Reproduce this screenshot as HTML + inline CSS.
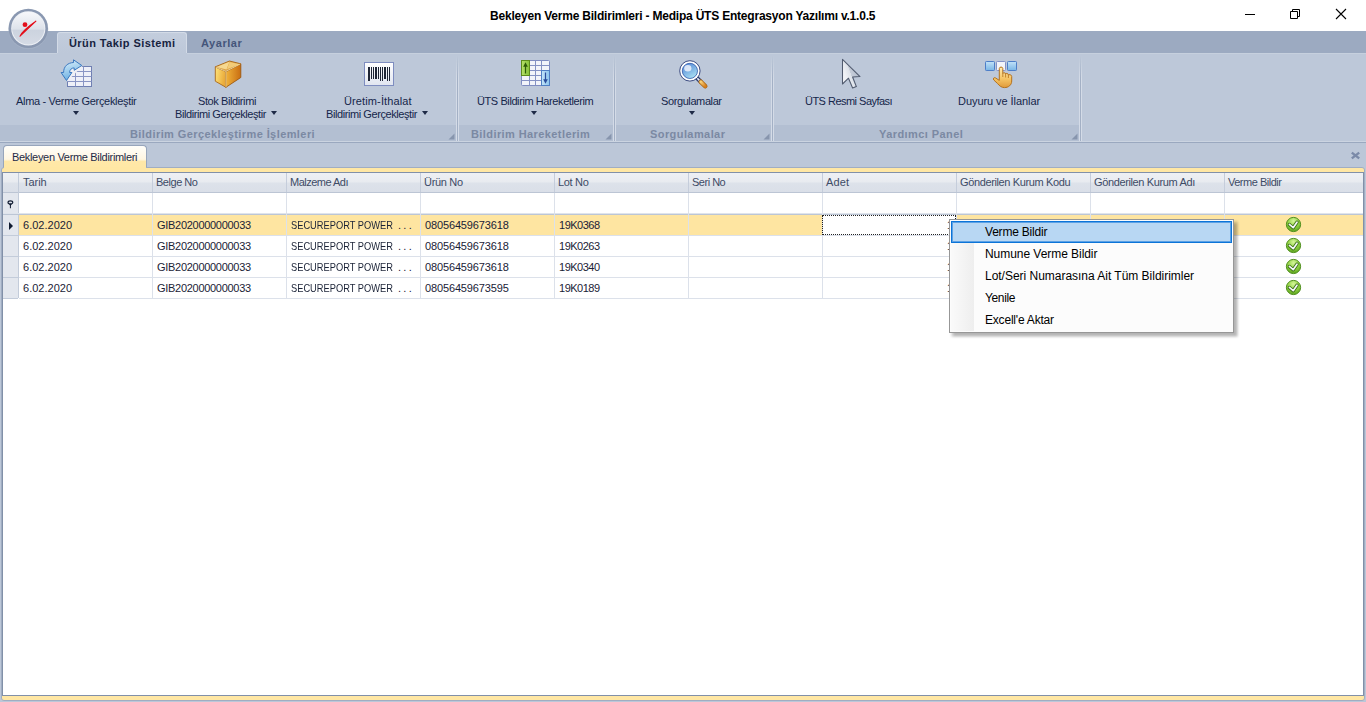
<!DOCTYPE html>
<html><head><meta charset="utf-8">
<style>
*{margin:0;padding:0;box-sizing:border-box}
html,body{width:1366px;height:702px;overflow:hidden;background:#bcc7d8;font-family:"Liberation Sans",sans-serif;font-size:11px}
.a{position:absolute}
.t{position:absolute;white-space:nowrap;line-height:11px}
#title{left:0;top:0;width:1366px;height:31px;background:#fff}
#tabrow{left:0;top:31px;width:1366px;height:22px;background:#9caac1}
#ribbon{left:0;top:53px;width:1366px;height:88px;background:#bdc8d9}
.cap{top:125px;height:16px;background:#b3bfd2}
.sep{top:53px;width:3px;height:88px;background:linear-gradient(90deg,rgba(214,221,232,.9) 0,rgba(214,221,232,.9) 1px,#a3b0c5 1px,#a3b0c5 2px,rgba(214,221,232,.9) 2px);-webkit-mask-image:linear-gradient(180deg,transparent 0,transparent 3px,#000 25px)}
.rt{color:#15264a;letter-spacing:-0.4px}
.ct{color:#7b89a3;font-weight:bold;letter-spacing:0.42px}
.arr{position:absolute;width:0;height:0;border-left:3.5px solid transparent;border-right:3.5px solid transparent;border-top:4px solid #1e2a46}
.hd{color:#3d4b66;letter-spacing:-0.4px}
.cell{color:#1a2236}
.vl{position:absolute;width:1px;background:#d7dde7}
.hl{position:absolute;height:1px;background:#d7dde7}
.mi{position:absolute;left:985px;font-size:12px;line-height:12px;color:#000;white-space:nowrap}
</style></head><body>
<!-- title bar -->
<div id="title" class="a"></div>
<div class="t" style="left:490px;top:10px;font-size:12px;line-height:12px;font-weight:bold;color:#000;letter-spacing:-0.21px">Bekleyen Verme Bildirimleri - Medipa ÜTS Entegrasyon Yazılımı v.1.0.5</div>
<div class="a" style="left:1245px;top:14px;width:10px;height:1px;background:#000"></div>
<svg class="a" style="left:1289px;top:8px" width="12" height="12" viewBox="0 0 12 12"><path d="M1.5 3.5h7v7h-7z M3.5 3.5v-2h7v7h-2" fill="none" stroke="#000" stroke-width="1"/></svg>
<svg class="a" style="left:1335px;top:8px" width="12" height="12" viewBox="0 0 12 12"><path d="M1 1L11 11M11 1L1 11" stroke="#000" stroke-width="1.1"/></svg>

<!-- tab row -->
<div id="tabrow" class="a"></div>
<div class="a" style="left:57px;top:32px;width:130px;height:21px;background:linear-gradient(#c3cddd,#bdc8d9);border:1px solid #d3dbe7;border-bottom:none;border-radius:3px 3px 0 0"></div>
<div class="t" style="left:69px;top:38px;font-weight:bold;color:#17233f;letter-spacing:0.43px">Ürün Takip Sistemi</div>
<div class="t" style="left:201px;top:38px;font-weight:bold;color:#44557a;letter-spacing:0.55px">Ayarlar</div>

<!-- ribbon -->
<div id="ribbon" class="a"></div>
<div class="a" style="left:0;top:53px;width:57px;height:1px;background:#c6d0de"></div><div class="a" style="left:187px;top:53px;width:1179px;height:1px;background:#c6d0de"></div>
<div class="a cap" style="left:0;width:456px"></div>
<div class="a cap" style="left:459px;width:154px"></div>
<div class="a cap" style="left:616px;width:155px"></div>
<div class="a cap" style="left:774px;width:305px"></div>
<div class="a sep" style="left:456px"></div>
<div class="a sep" style="left:613px"></div>
<div class="a sep" style="left:771px"></div>
<div class="a sep" style="left:1079px"></div>
<svg class="a" style="left:448px;top:133px" width="7" height="7" viewBox="0 0 7 7"><path d="M6.5 0.5V6.5H0.5Z" fill="#8795ad"/></svg>
<svg class="a" style="left:605px;top:133px" width="7" height="7" viewBox="0 0 7 7"><path d="M6.5 0.5V6.5H0.5Z" fill="#8795ad"/></svg>
<svg class="a" style="left:763px;top:133px" width="7" height="7" viewBox="0 0 7 7"><path d="M6.5 0.5V6.5H0.5Z" fill="#8795ad"/></svg>
<svg class="a" style="left:1071px;top:133px" width="7" height="7" viewBox="0 0 7 7"><path d="M6.5 0.5V6.5H0.5Z" fill="#8795ad"/></svg>
<div class="a" style="left:0;top:141px;width:1366px;height:1px;background:#cbd4e1"></div>
<div class="a" style="left:0;top:142px;width:1366px;height:1px;background:#9aa8bf"></div>

<!-- app button -->
<svg class="a" style="left:6px;top:6px" width="46" height="46" viewBox="0 0 46 46">
<defs>
<linearGradient id="apg" x1="0" y1="0" x2="0" y2="1"><stop offset="0" stop-color="#f7f8fb"/><stop offset="0.53" stop-color="#dde2ea"/><stop offset="0.56" stop-color="#ccd3df"/><stop offset="1" stop-color="#d5dbe5"/></linearGradient>
</defs>
<circle cx="22.3" cy="23.2" r="20" fill="#a9b5c9" opacity="0.5"/>
<circle cx="22.3" cy="22.4" r="19.7" fill="#8a98b1"/>
<circle cx="22.3" cy="22.4" r="17.1" fill="#eef1f6"/>
<circle cx="22.3" cy="22.2" r="16.2" fill="url(#apg)"/>
<circle cx="19" cy="18.7" r="2.4" fill="#e3101c"/>
<path d="M14 30.2 C 15.8 26.2, 22 20.6, 29.9 15.2 C 23.5 21.2, 18 26.4, 14 30.2 Z" fill="#e3101c" stroke="#e3101c" stroke-width="1.1" stroke-linejoin="round"/>
</svg>
<!-- Alma-Verme icon -->
<svg class="a" style="left:58px;top:56px" width="38" height="36" viewBox="0 0 38 36">
<defs><linearGradient id="arg" x1="0" y1="0" x2="0.3" y2="1"><stop offset="0" stop-color="#e2f4fd"/><stop offset="1" stop-color="#6cb0e2"/></linearGradient></defs>
<rect x="9.5" y="10.5" width="24" height="20" fill="#eef0f8" stroke="#6f7fb2" stroke-width="1"/>
<path d="M17.5 10.5V30.5M25.5 10.5V30.5M9.5 15.5H33.5M9.5 20.5H33.5M9.5 25.5H33.5" stroke="#8995c4" stroke-width="1"/>
<path d="M9 10 L24.5 10 L9 25.5 Z" fill="#eff0f4"/>
<path d="M15.5 3.8 L23.8 9.5 L16.2 14.3 L16.2 11.9 C13.4 11.9 11.6 13.8 11.6 16.5 L13.9 16.5 L8.5 24.5 L3.1 16.5 L5.6 16.5 C5.6 10.2 9.8 6.8 15.6 6.5 Z" fill="url(#arg)" stroke="#3a78c0" stroke-width="1" stroke-linejoin="round"/>
</svg>

<!-- Box icon -->
<svg class="a" style="left:210px;top:56px" width="38" height="36" viewBox="0 0 38 36">
<defs>
<linearGradient id="bxl" x1="0" y1="0" x2="1" y2="0.3"><stop offset="0" stop-color="#ffe47a"/><stop offset="1" stop-color="#e9a938"/></linearGradient>
<linearGradient id="bxr" x1="0" y1="0" x2="1" y2="0"><stop offset="0" stop-color="#f0b23a"/><stop offset="1" stop-color="#c96e12"/></linearGradient>
</defs>
<path d="M5.3 10.8 L15.9 15.6 L15.9 31.3 L5.3 25.2 Z" fill="url(#bxl)" stroke="#a8661a" stroke-width="0.9" stroke-linejoin="round"/>
<path d="M15.9 15.6 L30.8 7.8 L30.8 21.5 L15.9 31.3 Z" fill="url(#bxr)" stroke="#9c5810" stroke-width="0.9" stroke-linejoin="round"/>
<path d="M5.3 10.8 L19.5 5 L30.8 7.8 L15.9 15.6 Z" fill="#dca245" stroke="#a8661a" stroke-width="0.9" stroke-linejoin="round"/>
<path d="M6.5 11 L19.5 5.8 L16.5 13.5 Z" fill="#f6d890"/>
<path d="M17 13.2 L19.6 6 L29.8 8.2 Z" fill="#f3cc78"/>
<path d="M16 15.8 L16 31" stroke="#ffe9a8" stroke-width="0.8"/>
<path d="M5.8 11 L15.9 15.4 L30.2 8" fill="none" stroke="#fff0c0" stroke-width="0.7"/>
</svg>

<!-- Barcode icon -->
<svg class="a" style="left:360px;top:58px" width="38" height="32" viewBox="0 0 38 32">
<defs><linearGradient id="bcg" x1="0" y1="0" x2="0" y2="1"><stop offset="0" stop-color="#ffffff"/><stop offset="1" stop-color="#e0e5f0"/></linearGradient></defs>
<rect x="4.5" y="4.5" width="29" height="23" fill="url(#bcg)" stroke="#7e8dc0" stroke-width="1"/>
<g fill="#1e2535">
<rect x="8" y="9" width="2" height="14"/><rect x="11" y="9" width="1" height="12"/><rect x="13" y="9" width="1" height="12"/>
<rect x="15" y="9" width="2" height="12"/><rect x="18" y="9" width="1" height="12"/><rect x="20" y="9" width="1" height="14"/>
<rect x="22" y="9" width="1" height="14"/><rect x="24" y="9" width="2" height="12"/><rect x="27" y="9" width="1" height="14"/>
<rect x="29" y="9" width="1" height="14"/>
</g>
</svg>

<!-- ÜTS Bildirim Hareketlerim icon -->
<svg class="a" style="left:516px;top:56px" width="38" height="34" viewBox="0 0 38 34">
<defs>
<linearGradient id="hgg" x1="0" y1="0" x2="1" y2="0"><stop offset="0" stop-color="#b6e06a"/><stop offset="1" stop-color="#86c23a"/></linearGradient>
<linearGradient id="hbg" x1="0" y1="0" x2="1" y2="0"><stop offset="0" stop-color="#c4e4f8"/><stop offset="1" stop-color="#8cc4ec"/></linearGradient>
</defs>
<rect x="5.5" y="4.5" width="28" height="25" rx="1" fill="#f2f4fa" stroke="#7f8cc0" stroke-width="1"/>
<path d="M13.5 4.5V29.5M19.5 4.5V29.5M25.5 4.5V29.5M5.5 9.5H33.5M5.5 14.5H33.5M5.5 19.5H33.5M5.5 24.5H33.5" stroke="#8592c4" stroke-width="1"/>
<rect x="5.5" y="4.5" width="8" height="15" fill="url(#hgg)" stroke="#5d8c1c" stroke-width="1"/>
<path d="M9.5 17.5V9" stroke="#2c5a08" stroke-width="1.2"/><path d="M7.2 10.8L9.5 6.2L11.8 10.8Z" fill="#2c5a08"/>
<rect x="25.5" y="14.5" width="8" height="15" fill="url(#hbg)" stroke="#4f7fc4" stroke-width="1"/>
<path d="M29.5 16.5V25" stroke="#2a4d9c" stroke-width="1.2"/><path d="M27.2 23.2L29.5 27.8L31.8 23.2Z" fill="#2a4d9c"/>
</svg>

<!-- Magnifier -->
<svg class="a" style="left:674px;top:56px" width="38" height="36" viewBox="0 0 38 36">
<defs>
<linearGradient id="mgl" x1="0" y1="0" x2="0.6" y2="1"><stop offset="0" stop-color="#4c7fd2"/><stop offset="1" stop-color="#a6dcf2"/></linearGradient>
<linearGradient id="mgh" x1="0" y1="0" x2="1" y2="1"><stop offset="0" stop-color="#f8d27a"/><stop offset="1" stop-color="#d8801e"/></linearGradient>
</defs>
<path d="M23 22 L26.5 25.5" stroke="#2f3f70" stroke-width="4.2" stroke-linecap="round"/>
<path d="M23.3 22.3 L25.6 24.6" stroke="#e8eef8" stroke-width="1.6"/>
<path d="M26.8 25.8 L31.2 30.2" stroke="#b06a18" stroke-width="4.6" stroke-linecap="round"/>
<path d="M26.8 25.8 L31.2 30.2" stroke="url(#mgh)" stroke-width="3" stroke-linecap="round"/>
<circle cx="15.9" cy="14.9" r="10.2" fill="#fff" stroke="#3d4d82" stroke-width="1"/>
<circle cx="15.9" cy="14.9" r="7.6" fill="url(#mgl)" stroke="#2d55a8" stroke-width="0.8"/>
<ellipse cx="13.8" cy="12.2" rx="3.6" ry="3.2" fill="#eef2fb" opacity="0.85"/>
</svg>

<!-- Pointer -->
<svg class="a" style="left:834px;top:56px" width="38" height="36" viewBox="0 0 38 36">
<defs><linearGradient id="ptg" gradientUnits="userSpaceOnUse" x1="9" y1="14" x2="20" y2="10"><stop offset="0" stop-color="#f0f2f6"/><stop offset="0.5" stop-color="#dce1e9"/><stop offset="0.52" stop-color="#c6cdd9"/><stop offset="1" stop-color="#b9c2d0"/></linearGradient></defs>
<path d="M8.5 3.3 L8.5 28 L14.5 22.2 L18.6 32 L22.4 30.6 L18.6 21 L26 20.6 Z" fill="url(#ptg)" stroke="#515b6f" stroke-width="1.05" stroke-linejoin="round"/>
</svg>

<!-- Squares + hand -->
<svg class="a" style="left:982px;top:56px" width="38" height="36" viewBox="0 0 38 36">
<defs>
<linearGradient id="sqb" x1="0" y1="0" x2="0" y2="1"><stop offset="0" stop-color="#c2e2f8"/><stop offset="1" stop-color="#7ab6e6"/></linearGradient>
<linearGradient id="hnd" x1="0" y1="0" x2="0" y2="1"><stop offset="0" stop-color="#ffefb8"/><stop offset="0.6" stop-color="#f4c262"/><stop offset="1" stop-color="#e09a3a"/></linearGradient>
</defs>
<rect x="3.5" y="5.5" width="9" height="9" rx="0.8" fill="url(#sqb)" stroke="#4d7ec8" stroke-width="1"/>
<rect x="14.5" y="5.5" width="9" height="9" rx="0.8" fill="#f2f4fa" stroke="#8392c8" stroke-width="1"/>
<rect x="25.5" y="5.5" width="9" height="9" rx="0.8" fill="url(#sqb)" stroke="#4d7ec8" stroke-width="1"/>
<path d="M17.3 12.5 C17.3 10.6 20.8 10.6 20.8 12.5 L20.8 17.6 C21 16.4 23.6 16.4 23.6 18 C23.8 17.1 26.4 17.1 26.4 19 C26.7 18.4 29.7 18.4 29.7 20.5 L29.7 25 C29.7 29 26.5 31.6 22.5 31.6 C19.5 31.6 17.6 30 15.6 27.6 L11.8 24 C10.6 22.8 12 20.8 13.7 22 L17.3 24.4 Z" fill="url(#hnd)" stroke="#b4711c" stroke-width="1" stroke-linejoin="round"/>
<path d="M20.8 17.6 L20.8 21 M23.6 18 L23.6 21.5 M26.4 19 L26.4 22" stroke="#b4711c" stroke-width="0.8"/>
</svg>

<!-- ribbon texts -->
<div class="t rt" style="left:16px;top:96px;letter-spacing:-0.32px">Alma - Verme Gerçekleştir</div>
<div class="arr" style="left:73px;top:111px"></div>
<div class="t rt" style="left:198px;top:96px">Stok Bildirimi</div>
<div class="t rt" style="left:175px;top:109px;letter-spacing:-0.42px">Bildirimi Gerçekleştir</div>
<div class="arr" style="left:271px;top:111px"></div>
<div class="t rt" style="left:344px;top:96px;letter-spacing:0.12px">Üretim-İthalat</div>
<div class="t rt" style="left:326px;top:109px;letter-spacing:-0.42px">Bildirimi Gerçekleştir</div>
<div class="arr" style="left:422px;top:111px"></div>
<div class="t rt" style="left:477px;top:96px;letter-spacing:-0.41px">ÜTS Bildirim Hareketlerim</div>
<div class="arr" style="left:531px;top:111px"></div>
<div class="t rt" style="left:661px;top:96px">Sorgulamalar</div>
<div class="arr" style="left:689px;top:111px"></div>
<div class="t rt" style="left:805px;top:96px;letter-spacing:-0.52px">ÜTS Resmi Sayfası</div>
<div class="t rt" style="left:958px;top:96px;letter-spacing:-0.06px">Duyuru ve İlanlar</div>

<div class="t ct" style="left:130px;top:129px">Bildirim Gerçekleştirme İşlemleri</div>
<div class="t ct" style="left:471px;top:129px;letter-spacing:0.41px">Bildirim Hareketlerim</div>
<div class="t ct" style="left:650px;top:129px">Sorgulamalar</div>
<div class="t ct" style="left:879px;top:129px">Yardımcı Panel</div>

<!-- MDI -->
<div class="a" style="left:3px;top:145px;width:144px;height:27px;border:1px solid #97a5bb;border-bottom:none;border-radius:4px 4px 0 0;background:linear-gradient(#fffefa 0%,#fff6e2 50%,#fff2d2 55%,#ffe8a8 57%,#ffe7a4 100%)"></div>
<div class="t" style="left:12px;top:152px;color:#1e2a46;letter-spacing:-0.32px">Bekleyen Verme Bildirimleri</div>
<div class="a" style="left:1px;top:167px;width:1364px;height:534px;background:#ffe7a4;border:1px solid #a0adc2;border-radius:3px"></div>
<div class="a" style="left:4px;top:167px;width:142px;height:2px;background:#ffe7a4"></div>
<svg class="a" style="left:1350px;top:151px" width="11" height="9" viewBox="0 0 11 9"><path d="M1.8 1.6L9.2 7.4M9.2 1.6L1.8 7.4" stroke="#7b8aa8" stroke-width="2.4"/></svg>

<!-- grid -->
<div class="a" style="left:2px;top:172px;width:1362px;height:524px;background:#fff;border:1px solid #8190a8"></div>
<!-- header -->
<div class="a" style="left:3px;top:173px;width:1360px;height:19px;background:linear-gradient(#eef0f4 0%,#e8ebf0 48%,#dde2ea 52%,#dadfe8 100%)"></div>
<div class="a" style="left:3px;top:192px;width:1360px;height:1px;background:#bcc5d4"></div>
<!-- indicator col -->
<div class="a" style="left:3px;top:193px;width:15px;height:105px;background:#e3e7ee"></div>
<div class="a" style="left:18px;top:173px;width:1px;height:125px;background:#c3ccda"></div>
<!-- filter row bottom -->
<div class="a" style="left:3px;top:213px;width:1360px;height:1px;background:#dfe4ec"></div>
<div class="a" style="left:3px;top:214px;width:1360px;height:1px;background:#bcc6d5"></div>
<!-- selected row -->
<div class="a" style="left:19px;top:215px;width:1344px;height:20px;background:#fee5a1"></div>
<div class="a" style="left:823px;top:215px;width:133px;height:20px;background:#fff"></div>


<div class="a" style="left:152px;top:173px;width:1px;height:19px;background:#c5cddb"></div>
<div class="a" style="left:152px;top:193px;width:1px;height:105px;background:#dce1ea"></div>
<div class="a" style="left:286px;top:173px;width:1px;height:19px;background:#c5cddb"></div>
<div class="a" style="left:286px;top:193px;width:1px;height:105px;background:#dce1ea"></div>
<div class="a" style="left:420px;top:173px;width:1px;height:19px;background:#c5cddb"></div>
<div class="a" style="left:420px;top:193px;width:1px;height:105px;background:#dce1ea"></div>
<div class="a" style="left:554px;top:173px;width:1px;height:19px;background:#c5cddb"></div>
<div class="a" style="left:554px;top:193px;width:1px;height:105px;background:#dce1ea"></div>
<div class="a" style="left:688px;top:173px;width:1px;height:19px;background:#c5cddb"></div>
<div class="a" style="left:688px;top:193px;width:1px;height:105px;background:#dce1ea"></div>
<div class="a" style="left:822px;top:173px;width:1px;height:19px;background:#c5cddb"></div>
<div class="a" style="left:822px;top:193px;width:1px;height:105px;background:#dce1ea"></div>
<div class="a" style="left:956px;top:173px;width:1px;height:19px;background:#c5cddb"></div>
<div class="a" style="left:956px;top:193px;width:1px;height:105px;background:#dce1ea"></div>
<div class="a" style="left:1090px;top:173px;width:1px;height:19px;background:#c5cddb"></div>
<div class="a" style="left:1090px;top:193px;width:1px;height:105px;background:#dce1ea"></div>
<div class="a" style="left:1224px;top:173px;width:1px;height:19px;background:#c5cddb"></div>
<div class="a" style="left:1224px;top:193px;width:1px;height:105px;background:#dce1ea"></div>
<div class="t hd" style="left:23px;top:177px;letter-spacing:-0.05px">Tarih</div>
<div class="t hd" style="left:156px;top:177px;letter-spacing:-0.47px">Belge No</div>
<div class="t hd" style="left:290px;top:177px;letter-spacing:-0.51px">Malzeme Adı</div>
<div class="t hd" style="left:424px;top:177px;letter-spacing:-0.31px">Ürün No</div>
<div class="t hd" style="left:558px;top:177px;letter-spacing:-0.32px">Lot No</div>
<div class="t hd" style="left:692px;top:177px;letter-spacing:-0.49px">Seri No</div>
<div class="t hd" style="left:826px;top:177px;letter-spacing:0.14px">Adet</div>
<div class="t hd" style="left:960px;top:177px;letter-spacing:-0.37px">Gönderilen Kurum Kodu</div>
<div class="t hd" style="left:1094px;top:177px;letter-spacing:-0.37px">Gönderilen Kurum Adı</div>
<div class="t hd" style="left:1228px;top:177px;letter-spacing:-0.49px">Verme Bildir</div>
<div class="a" style="left:19px;top:235px;width:1344px;height:1px;background:#dce1ea"></div>
<div class="a" style="left:3px;top:235px;width:15px;height:1px;background:#c3ccda"></div>
<div class="a" style="left:19px;top:256px;width:1344px;height:1px;background:#dce1ea"></div>
<div class="a" style="left:3px;top:256px;width:15px;height:1px;background:#c3ccda"></div>
<div class="a" style="left:19px;top:277px;width:1344px;height:1px;background:#dce1ea"></div>
<div class="a" style="left:3px;top:277px;width:15px;height:1px;background:#c3ccda"></div>
<div class="a" style="left:19px;top:298px;width:1344px;height:1px;background:#dce1ea"></div>
<div class="a" style="left:3px;top:298px;width:15px;height:1px;background:#c3ccda"></div>
<div class="t cell" style="left:23px;top:220px;letter-spacing:0.02px">6.02.2020</div>
<div class="t cell" style="left:157px;top:220px;letter-spacing:-0.29px">GIB2020000000033</div>
<div class="t cell" style="left:291px;top:220px;transform:scaleX(0.845);transform-origin:0 0">SECUREPORT POWER</div><div class="t cell" style="left:398px;top:220px;letter-spacing:2.3px">...</div>
<div class="t cell" style="left:425px;top:220px;letter-spacing:-0.14px">08056459673618</div>
<div class="t cell" style="left:559px;top:220px;letter-spacing:-0.49px">19K0368</div>
<div class="t cell" style="left:947px;top:220px">1</div>
<svg class="a" style="left:1285px;top:216px" width="17" height="17" viewBox="0 0 17 17"><defs><radialGradient id="g0" cx="50%" cy="25%" r="75%"><stop offset="0" stop-color="#d4f59a"/><stop offset="0.55" stop-color="#92d243"/><stop offset="1" stop-color="#5ca520"/></radialGradient></defs><circle cx="8.5" cy="8.5" r="7.1" fill="url(#g0)" stroke="#4c8c1a" stroke-width="1"/><path d="M4.4 8.4L8.2 11.7L12 6.2" fill="none" stroke="#356b10" stroke-width="3.3" stroke-linejoin="round" stroke-linecap="round"/><path d="M4.4 8.4L8.2 11.7L12 6.2" fill="none" stroke="#f4f6f8" stroke-width="1.7" stroke-linejoin="round" stroke-linecap="round"/></svg>
<div class="t cell" style="left:23px;top:241px;letter-spacing:0.02px">6.02.2020</div>
<div class="t cell" style="left:157px;top:241px;letter-spacing:-0.29px">GIB2020000000033</div>
<div class="t cell" style="left:291px;top:241px;transform:scaleX(0.845);transform-origin:0 0">SECUREPORT POWER</div><div class="t cell" style="left:398px;top:241px;letter-spacing:2.3px">...</div>
<div class="t cell" style="left:425px;top:241px;letter-spacing:-0.14px">08056459673618</div>
<div class="t cell" style="left:559px;top:241px;letter-spacing:-0.49px">19K0263</div>
<div class="t cell" style="left:947px;top:241px">1</div>
<svg class="a" style="left:1285px;top:237px" width="17" height="17" viewBox="0 0 17 17"><defs><radialGradient id="g1" cx="50%" cy="25%" r="75%"><stop offset="0" stop-color="#d4f59a"/><stop offset="0.55" stop-color="#92d243"/><stop offset="1" stop-color="#5ca520"/></radialGradient></defs><circle cx="8.5" cy="8.5" r="7.1" fill="url(#g1)" stroke="#4c8c1a" stroke-width="1"/><path d="M4.4 8.4L8.2 11.7L12 6.2" fill="none" stroke="#356b10" stroke-width="3.3" stroke-linejoin="round" stroke-linecap="round"/><path d="M4.4 8.4L8.2 11.7L12 6.2" fill="none" stroke="#f4f6f8" stroke-width="1.7" stroke-linejoin="round" stroke-linecap="round"/></svg>
<div class="t cell" style="left:23px;top:262px;letter-spacing:0.02px">6.02.2020</div>
<div class="t cell" style="left:157px;top:262px;letter-spacing:-0.29px">GIB2020000000033</div>
<div class="t cell" style="left:291px;top:262px;transform:scaleX(0.845);transform-origin:0 0">SECUREPORT POWER</div><div class="t cell" style="left:398px;top:262px;letter-spacing:2.3px">...</div>
<div class="t cell" style="left:425px;top:262px;letter-spacing:-0.14px">08056459673618</div>
<div class="t cell" style="left:559px;top:262px;letter-spacing:-0.49px">19K0340</div>
<div class="t cell" style="left:947px;top:262px">1</div>
<svg class="a" style="left:1285px;top:258px" width="17" height="17" viewBox="0 0 17 17"><defs><radialGradient id="g2" cx="50%" cy="25%" r="75%"><stop offset="0" stop-color="#d4f59a"/><stop offset="0.55" stop-color="#92d243"/><stop offset="1" stop-color="#5ca520"/></radialGradient></defs><circle cx="8.5" cy="8.5" r="7.1" fill="url(#g2)" stroke="#4c8c1a" stroke-width="1"/><path d="M4.4 8.4L8.2 11.7L12 6.2" fill="none" stroke="#356b10" stroke-width="3.3" stroke-linejoin="round" stroke-linecap="round"/><path d="M4.4 8.4L8.2 11.7L12 6.2" fill="none" stroke="#f4f6f8" stroke-width="1.7" stroke-linejoin="round" stroke-linecap="round"/></svg>
<div class="t cell" style="left:23px;top:283px;letter-spacing:0.02px">6.02.2020</div>
<div class="t cell" style="left:157px;top:283px;letter-spacing:-0.29px">GIB2020000000033</div>
<div class="t cell" style="left:291px;top:283px;transform:scaleX(0.845);transform-origin:0 0">SECUREPORT POWER</div><div class="t cell" style="left:398px;top:283px;letter-spacing:2.3px">...</div>
<div class="t cell" style="left:425px;top:283px;letter-spacing:-0.14px">08056459673595</div>
<div class="t cell" style="left:559px;top:283px;letter-spacing:-0.49px">19K0189</div>
<div class="t cell" style="left:947px;top:283px">1</div>
<svg class="a" style="left:1285px;top:279px" width="17" height="17" viewBox="0 0 17 17"><defs><radialGradient id="g3" cx="50%" cy="25%" r="75%"><stop offset="0" stop-color="#d4f59a"/><stop offset="0.55" stop-color="#92d243"/><stop offset="1" stop-color="#5ca520"/></radialGradient></defs><circle cx="8.5" cy="8.5" r="7.1" fill="url(#g3)" stroke="#4c8c1a" stroke-width="1"/><path d="M4.4 8.4L8.2 11.7L12 6.2" fill="none" stroke="#356b10" stroke-width="3.3" stroke-linejoin="round" stroke-linecap="round"/><path d="M4.4 8.4L8.2 11.7L12 6.2" fill="none" stroke="#f4f6f8" stroke-width="1.7" stroke-linejoin="round" stroke-linecap="round"/></svg>
<svg class="a" style="left:7px;top:200px" width="7" height="9" viewBox="0 0 7 9"><path d="M1.2 2.6 L5.6 2.6 L3.9 5.6 L3.9 8.2 L2.9 8.2 L2.9 5.6 Z" fill="#0f1a30"/><ellipse cx="3.4" cy="2.4" rx="2.4" ry="1.5" fill="#d8dde8" stroke="#0f1a30" stroke-width="1.1"/></svg>
<div class="a" style="left:9px;top:221.5px;width:0;height:0;border-top:4px solid transparent;border-bottom:4px solid transparent;border-left:4.2px solid #0f1a30"></div>
<div class="a" style="left:822px;top:215px;width:134px;height:20px;border:1px dotted #222"></div>
<div class="a" style="left:951px;top:221px;width:287px;height:116px;background:rgba(0,0,0,0.10);filter:blur(1px)"></div><div class="a" style="left:953px;top:223px;width:284px;height:113px;background:rgba(0,0,0,0.22);filter:blur(1.5px)"></div>
<div class="a" style="left:949px;top:219px;width:285px;height:114px;background:#fcfcfc;border:1px solid #979797"></div>
<div class="a" style="left:951px;top:243px;width:23px;height:88px;background:linear-gradient(90deg,#fafafa,#eeeeee)"></div>
<div class="a" style="left:951px;top:221px;width:281px;height:22px;background:#b8d7f3;border:1px solid #0b74d8;box-shadow:inset 0 0 0 1px rgba(30,125,220,0.6)"></div>
<div class="mi" style="top:226px;letter-spacing:-0.21px">Verme Bildir</div>
<div class="mi" style="top:248px;letter-spacing:-0.05px">Numune Verme Bildir</div>
<div class="mi" style="top:270px;letter-spacing:-0.02px">Lot/Seri Numarasına Ait Tüm Bildirimler</div>
<div class="mi" style="top:292px;letter-spacing:-0.36px">Yenile</div>
<div class="mi" style="top:314px;letter-spacing:-0.2px">Excell'e Aktar</div>
</body></html>
